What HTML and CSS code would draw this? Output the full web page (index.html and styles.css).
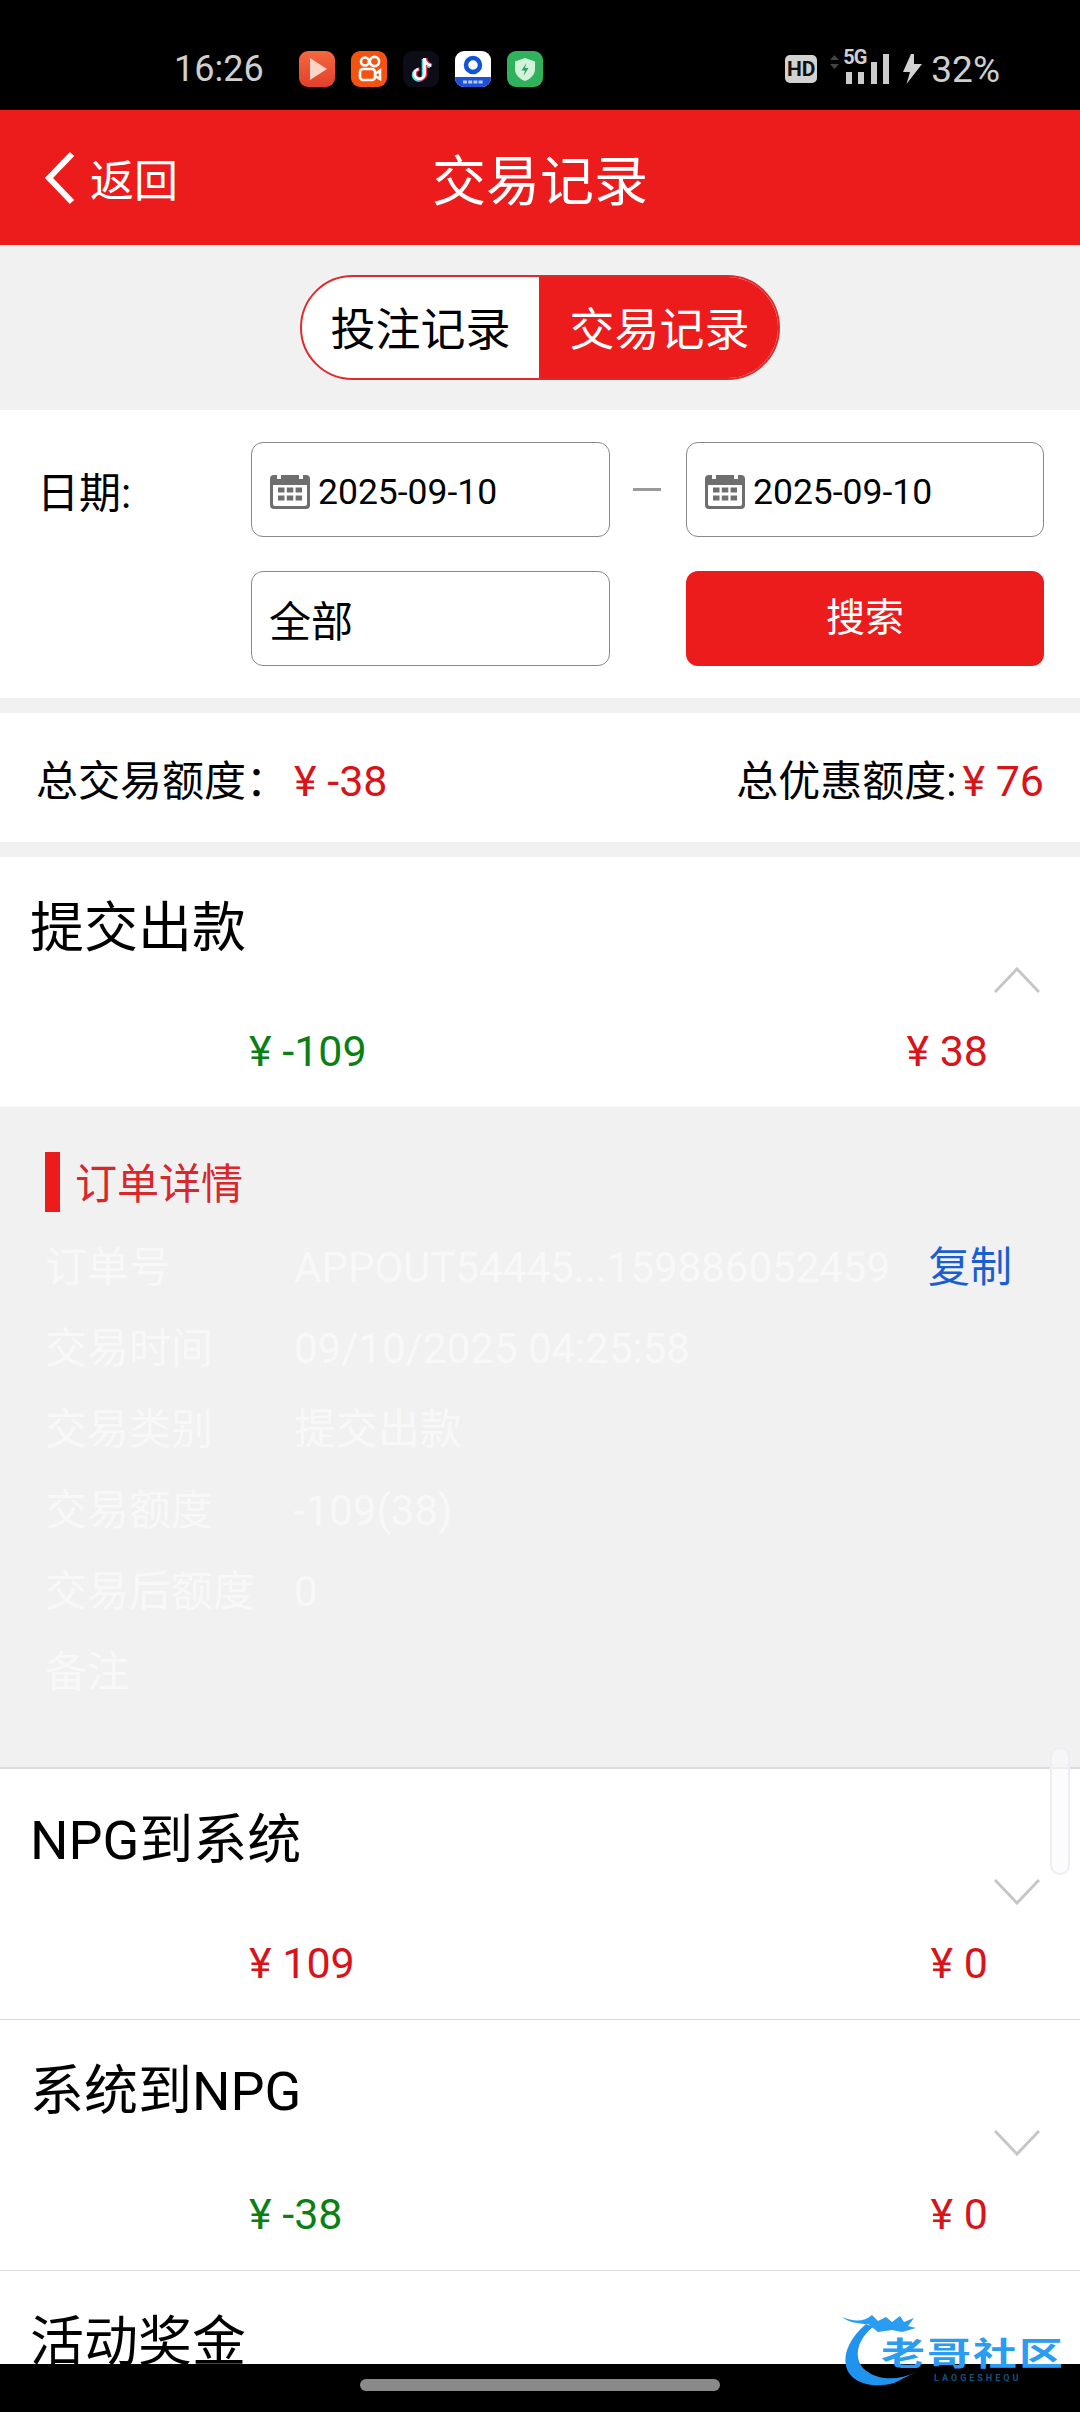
FILE: index.html

```html
<!DOCTYPE html>
<html>
<head>
  <meta charset="UTF-8">
  <title>交易记录</title>
  <link rel="stylesheet" href="styles.css">
</head>
<body>

<div class="status-bar">
  <span class="clock">16:26</span>
  <div class="app-icons">
    <svg class="app-icon" viewBox="0 0 36 36">
      <defs><linearGradient id="playBg" x1="0" y1="0" x2="0" y2="1"><stop offset="0" stop-color="#f4683f"/><stop offset="1" stop-color="#e2402a"/></linearGradient></defs>
      <rect width="36" height="36" rx="9" fill="url(#playBg)"/>
      <path d="M11 7 L28 18 L11 29 Z" fill="#fcd5c8"/>
    </svg>
    <svg class="app-icon" viewBox="0 0 36 36">
      <rect width="36" height="36" rx="9" fill="#f4530f"/>
      <g fill="none" stroke="#fff" stroke-width="2.6">
        <circle cx="14" cy="10.5" r="4"/>
        <circle cx="23.5" cy="10.5" r="4.6"/>
        <rect x="9" y="18" width="15" height="11" rx="3"/>
        <path d="M24 23 L29 19.5 V28 L24 25"/>
      </g>
    </svg>
    <svg class="app-icon" viewBox="0 0 36 36">
      <rect width="36" height="36" rx="9" fill="#0c0d16"/>
      <path d="M21.5 7 V23 A5 5 0 1 1 15.5 18 M21.5 8 C22.5 12 25 14 28 14.5" fill="none" stroke="#4fe3e6" stroke-width="3.6" transform="translate(-1 1)"/>
      <path d="M21.5 7 V23 A5 5 0 1 1 15.5 18 M21.5 8 C22.5 12 25 14 28 14.5" fill="none" stroke="#f0365a" stroke-width="3.6" transform="translate(1 0)"/>
      <path d="M21.5 7 V23 A5 5 0 1 1 15.5 18 M21.5 8 C22.5 12 25 14 28 14.5" fill="none" stroke="#fff" stroke-width="2.8"/>
    </svg>
    <svg class="app-icon" viewBox="0 0 36 36">
      <rect width="36" height="36" rx="9" fill="#fff"/>
      <path d="M0 26 H36 V27 A9 9 0 0 1 27 36 H9 A9 9 0 0 1 0 27 Z" fill="#1f50d8"/>
      <circle cx="18" cy="14" r="7" fill="none" stroke="#1254d8" stroke-width="4.5"/>
      <path d="M8 31 H28" stroke="#b9cbf7" stroke-width="3" stroke-dasharray="4 1.2"/>
    </svg>
    <svg class="app-icon" viewBox="0 0 36 36">
      <rect width="36" height="36" rx="9" fill="#30b25c"/>
      <path d="M18 7 L28 10.5 V18 C28 24 23 28 18 30 C13 28 8 24 8 18 V10.5 Z" fill="#d3f2dc"/>
      <path d="M19.5 12 L14.5 19.5 H18 L16.5 25 L21.5 17 H18 Z" fill="#30a558"/>
    </svg>
  </div>
  <div class="status-right">
    <span class="hd-badge">HD</span>
    <svg class="signal" viewBox="0 0 60 32">
      <path d="M0 7 L4.5 2 L9 7 Z M0 11 L4.5 16 L9 11 Z" fill="#444"/>
      <rect x="16" y="19" width="6" height="12" fill="#ccc"/>
      <rect x="28" y="19" width="6" height="12" fill="#ccc"/>
      <rect x="41" y="9" width="6" height="22" fill="#ccc"/>
      <rect x="53" y="1" width="6" height="30" fill="#ccc"/>
    </svg>
    <span class="five-g">5G</span>
    <svg class="bolt" viewBox="0 0 19 30"><path d="M8 0 H11 V10 H19 L3.5 30 L7 18 H0 Z" fill="#d2d2d2"/></svg>
    <span class="battery">32%</span>
  </div>
</div>

<div class="top-bar">
  <div class="back">
    <svg class="back-arrow" viewBox="0 0 32 54"><path d="M28 3 L5 27 L28 51" fill="none" stroke="#fff" stroke-width="6"/></svg>
    <span>返回</span>
  </div>
  <div class="page-title">交易记录</div>
</div>

<div class="page">
  <div class="tabs-wrap">
    <div class="tabs">
      <div class="tab">投注记录</div>
      <div class="tab active">交易记录</div>
    </div>
  </div>

  <div class="filter">
    <div class="filter-label">日期:</div>
    <div class="field">
      <svg class="cal" viewBox="0 0 40 38">
        <path d="M4 4 H36 A4 4 0 0 1 40 8 V34 A4 4 0 0 1 36 38 H4 A4 4 0 0 1 0 34 V8 A4 4 0 0 1 4 4 Z M3 14 V33 A2 2 0 0 0 5 35 H35 A2 2 0 0 0 37 33 V14 Z" fill="#6e6e6e" fill-rule="evenodd"/>
        <path d="M9 1 V8 M31 1 V8" stroke="#fff" stroke-width="4"/>
        <path d="M8 19 H32 M8 27 H32" stroke="#6e6e6e" stroke-width="5" stroke-dasharray="6.5 2.3"/>
      </svg>
      <span class="date">2025-09-10</span>
    </div>
    <div class="dash"></div>
    <div class="field">
      <svg class="cal" viewBox="0 0 40 38">
        <path d="M4 4 H36 A4 4 0 0 1 40 8 V34 A4 4 0 0 1 36 38 H4 A4 4 0 0 1 0 34 V8 A4 4 0 0 1 4 4 Z M3 14 V33 A2 2 0 0 0 5 35 H35 A2 2 0 0 0 37 33 V14 Z" fill="#6e6e6e" fill-rule="evenodd"/>
        <path d="M9 1 V8 M31 1 V8" stroke="#fff" stroke-width="4"/>
        <path d="M8 19 H32 M8 27 H32" stroke="#6e6e6e" stroke-width="5" stroke-dasharray="6.5 2.3"/>
      </svg>
      <span class="date">2025-09-10</span>
    </div>
    <div class="field select">全部</div>
    <div class="search-btn">搜索</div>
  </div>

  <div class="summary">
    <div>总交易额度：<span class="red total-left">¥ -38</span></div>
    <div>总优惠额度:<span class="red total-right">¥ 76</span></div>
  </div>

  <div class="item open">
    <div class="item-head">
      <div class="item-title">提交出款</div>
      <svg class="chev" viewBox="0 0 46 26"><path d="M1 25 L23 2 L45 25" fill="none" stroke="#c6c6c6" stroke-width="3"/></svg>
    </div>
    <div class="amounts">
      <span class="green">¥ -109</span>
      <span class="red">¥ 38</span>
    </div>
  </div>

  <div class="detail">
    <div class="detail-title">订单详情</div>
    <div class="detail-row">
      <span class="detail-key">订单号</span>
      <span class="detail-val">APPOUT54445...159886052459</span>
      <span class="copy">复制</span>
    </div>
    <div class="detail-row"><span class="detail-key">交易时间</span><span class="detail-val">09/10/2025 04:25:58</span></div>
    <div class="detail-row"><span class="detail-key">交易类别</span><span class="detail-val">提交出款</span></div>
    <div class="detail-row"><span class="detail-key">交易额度</span><span class="detail-val">-109(38)</span></div>
    <div class="detail-row"><span class="detail-key">交易后额度</span><span class="detail-val">0</span></div>
    <div class="detail-row"><span class="detail-key">备注</span></div>
  </div>

  <div class="item">
    <div class="item-head">
      <div class="item-title">NPG到系统</div>
      <svg class="chev" viewBox="0 0 46 26"><path d="M1 1 L23 24 L45 1" fill="none" stroke="#c6c6c6" stroke-width="3"/></svg>
    </div>
    <div class="amounts">
      <span class="red">¥ 109</span>
      <span class="red">¥ 0</span>
    </div>
  </div>

  <div class="item">
    <div class="item-head">
      <div class="item-title">系统到NPG</div>
      <svg class="chev" viewBox="0 0 46 26"><path d="M1 1 L23 24 L45 1" fill="none" stroke="#c6c6c6" stroke-width="3"/></svg>
    </div>
    <div class="amounts">
      <span class="green">¥ -38</span>
      <span class="red">¥ 0</span>
    </div>
  </div>

  <div class="item">
    <div class="item-head">
      <div class="item-title">活动奖金</div>
    </div>
  </div>
</div>

<div class="nav-bar"><div class="nav-pill"></div></div>

<div class="scroll-thumb"></div>

<div class="watermark">
  <svg class="dragon" viewBox="0 0 90 80">
    <path d="M24 12 C9 25 1 40 4 54 C8 71 30 77 52 71 L74 60 C56 69 34 69 21 56 C11 44 16 27 31 15 Z" fill="#1f93ee"/>
    <path d="M0 5 C12 10 22 10 30 3 L36 9 L44 5 L50 10 L58 4 L62 10 L72 6 L66 14 L74 16 L60 20 L50 18 L36 20 L26 12 C16 12 6 10 0 5 Z" fill="#2a9df2"/>
  </svg>
  <div class="wm-name">老哥社区</div>
  <div class="wm-sub">LAOGESHEQU</div>
</div>

</body>
</html>
```

FILE: styles.css

```css
* {
  box-sizing: border-box;
}
body {
  position: relative;
  display: flex;
  flex-direction: column;
  width: 1080px;
  height: 2412px;
  margin: 0;
  overflow: hidden;
  background: #fff;
  color: #000;
  font-family: Roboto, "Noto Sans CJK SC", sans-serif;
  font-size: 42px;
}

/* status bar */
.status-bar {
  display: flex;
  align-items: center;
  flex: 0 0 110px;
  padding: 28px 80px 0 174px;
  background: #000;
  color: #cfcfcf;
}
.clock {
  width: 125px;
  font-size: 36px;
}
.app-icons {
  display: flex;
  gap: 16px;
}
.app-icon {
  display: block;
  width: 36px;
  height: 36px;
}
.status-right {
  position: relative;
  display: flex;
  align-items: center;
  margin-left: auto;
}
.hd-badge {
  width: 32px;
  height: 28px;
  border-radius: 5px;
  background: #d2d2d2;
  color: #111;
  font-size: 21px;
  font-weight: 700;
  line-height: 28px;
  text-align: center;
}
.signal {
  width: 60px;
  height: 32px;
  margin-left: 13px;
}
.five-g {
  position: absolute;
  left: 58px;
  top: -1px;
  font-size: 20px;
  font-weight: 700;
  letter-spacing: -1px;
  line-height: 20px;
}
.bolt {
  width: 19px;
  height: 30px;
  margin-left: 13px;
}
.battery {
  margin-left: 9px;
  font-size: 37px;
}

/* red title bar */
.top-bar {
  display: grid;
  grid-template-columns: 1fr auto 1fr;
  align-items: center;
  flex: 0 0 135px;
  background: #ec1c1c;
  color: #fff;
}
.back {
  display: flex;
  align-items: center;
  gap: 14px;
  padding-left: 44px;
  font-size: 44px;
}
.back-arrow {
  width: 32px;
  height: 54px;
}
.page-title {
  grid-column: 2;
  font-size: 54px;
}

/* scroll area */
.page {
  flex: 1;
  min-height: 0;
  overflow: hidden;
}
.tabs-wrap {
  display: flex;
  justify-content: center;
  padding: 30px 0;
  background: #f1f1f1;
}
.tabs {
  display: flex;
  width: 480px;
  height: 105px;
  overflow: hidden;
  border: 2px solid #e02a2a;
  border-radius: 53px;
  background: #fff;
}
.tab {
  flex: 0 0 237px;
  font-size: 45px;
  line-height: 108px;
  text-align: center;
}
.tab.active {
  flex: 1;
  padding-left: 2px;
  background: #ec1c1c;
  color: #fff;
}

.filter {
  display: grid;
  grid-template-columns: 251px 359px 76px 358px;
  grid-auto-rows: 95px;
  row-gap: 34px;
  align-items: center;
  padding: 32px 36px 32px 0;
}
.filter-label {
  padding-left: 37px;
}
.field {
  display: flex;
  align-items: center;
  height: 95px;
  padding-left: 18px;
  border: 1px solid #888;
  border-radius: 12px;
  font-size: 36px;
}
.date {
  margin-top: 5px;
  font-size: 35.5px;
}
.cal {
  flex: none;
  width: 40px;
  height: 38px;
  margin-right: 8px;
}
.dash {
  width: 28px;
  height: 3px;
  margin-left: 23px;
  background: #9a9a9a;
}
.select {
  grid-column: 2;
  padding-left: 17px;
  font-size: 42px;
}
.search-btn {
  grid-column: 4;
  height: 95px;
  border-radius: 12px;
  background: #ec1c1c;
  color: #fff;
  font-size: 39px;
  line-height: 95px;
  text-align: center;
}

.summary {
  display: flex;
  justify-content: space-between;
  align-items: center;
  height: 129px;
  padding: 0 36px 0 36px;
  border-top: 15px solid #f1f1f1;
  box-sizing: content-box;
  font-size: 42px;
}
.red {
  color: #d8141a;
  font-size: 43px;
}
.green {
  color: #0a8014;
  font-size: 43px;
}
.total-left {
  margin-left: 6px;
}
.total-right {
  margin-left: 6px;
}

/* list rows */
.item {
  height: 251px;
  border-bottom: 1px solid #dcdcdc;
}
.item.open {
  height: 250px;
  border-top: 15px solid #f1f1f1;
  border-bottom: none;
  box-sizing: content-box;
}
.item-head {
  display: flex;
  justify-content: space-between;
  align-items: flex-end;
  height: 136px;
  padding-right: 40px;
}
.item-title {
  align-self: flex-start;
  padding: 38px 0 0 30px;
  font-size: 54px;
  line-height: 68px;
}
.chev {
  display: block;
  width: 46px;
  height: 26px;
}
.amounts {
  display: flex;
  justify-content: space-between;
  height: 114px;
  padding: 1px 92px 0 249px;
  line-height: 114px;
}

.detail {
  height: 662px;
  padding: 45px 0 0 45px;
  border-bottom: 2px solid #dcdcdc;
  background: #f1f1f1;
  color: #f8f8f8;
}
.detail-title {
  height: 60px;
  margin: 0 0 15px;
  padding-left: 15px;
  border-left: 15px solid #ec1c1c;
  color: #d8282c;
  font-size: 42px;
  line-height: 66px;
}
.detail-row {
  display: flex;
  height: 81px;
  line-height: 81px;
}
.detail-key {
  flex: 0 0 249px;
}
.detail-val {
  width: 634px;
}
.copy {
  color: #1a5fd2;
}

/* bottom bar */
.nav-bar {
  display: flex;
  justify-content: center;
  align-items: flex-start;
  flex: 0 0 48px;
  padding-top: 15px;
  background: #000;
}
.nav-pill {
  width: 360px;
  height: 12px;
  border-radius: 6px;
  background: #8a8a8a;
}

/* overlays */
.scroll-thumb {
  position: absolute;
  left: 1050px;
  top: 1747px;
  width: 20px;
  height: 128px;
  border: 2px solid #eceef3;
  border-radius: 10px;
  background: rgba(250, 250, 252, 0.6);
}
.watermark {
  position: absolute;
  left: 842px;
  top: 2312px;
  width: 230px;
  height: 80px;
}
.dragon {
  position: absolute;
  left: 0;
  top: 0;
  width: 90px;
  height: 80px;
}
.wm-name {
  position: absolute;
  left: 39px;
  top: 24px;
  color: #2a9cf2;
  font-size: 44px;
  font-weight: 700;
  letter-spacing: 2px;
  line-height: 36px;
  white-space: nowrap;
  transform: scaleY(0.72);
}
.wm-sub {
  position: absolute;
  left: 92px;
  top: 61px;
  color: #14507f;
  font-size: 9px;
  font-weight: 700;
  letter-spacing: 3px;
  line-height: 10px;
}
```
